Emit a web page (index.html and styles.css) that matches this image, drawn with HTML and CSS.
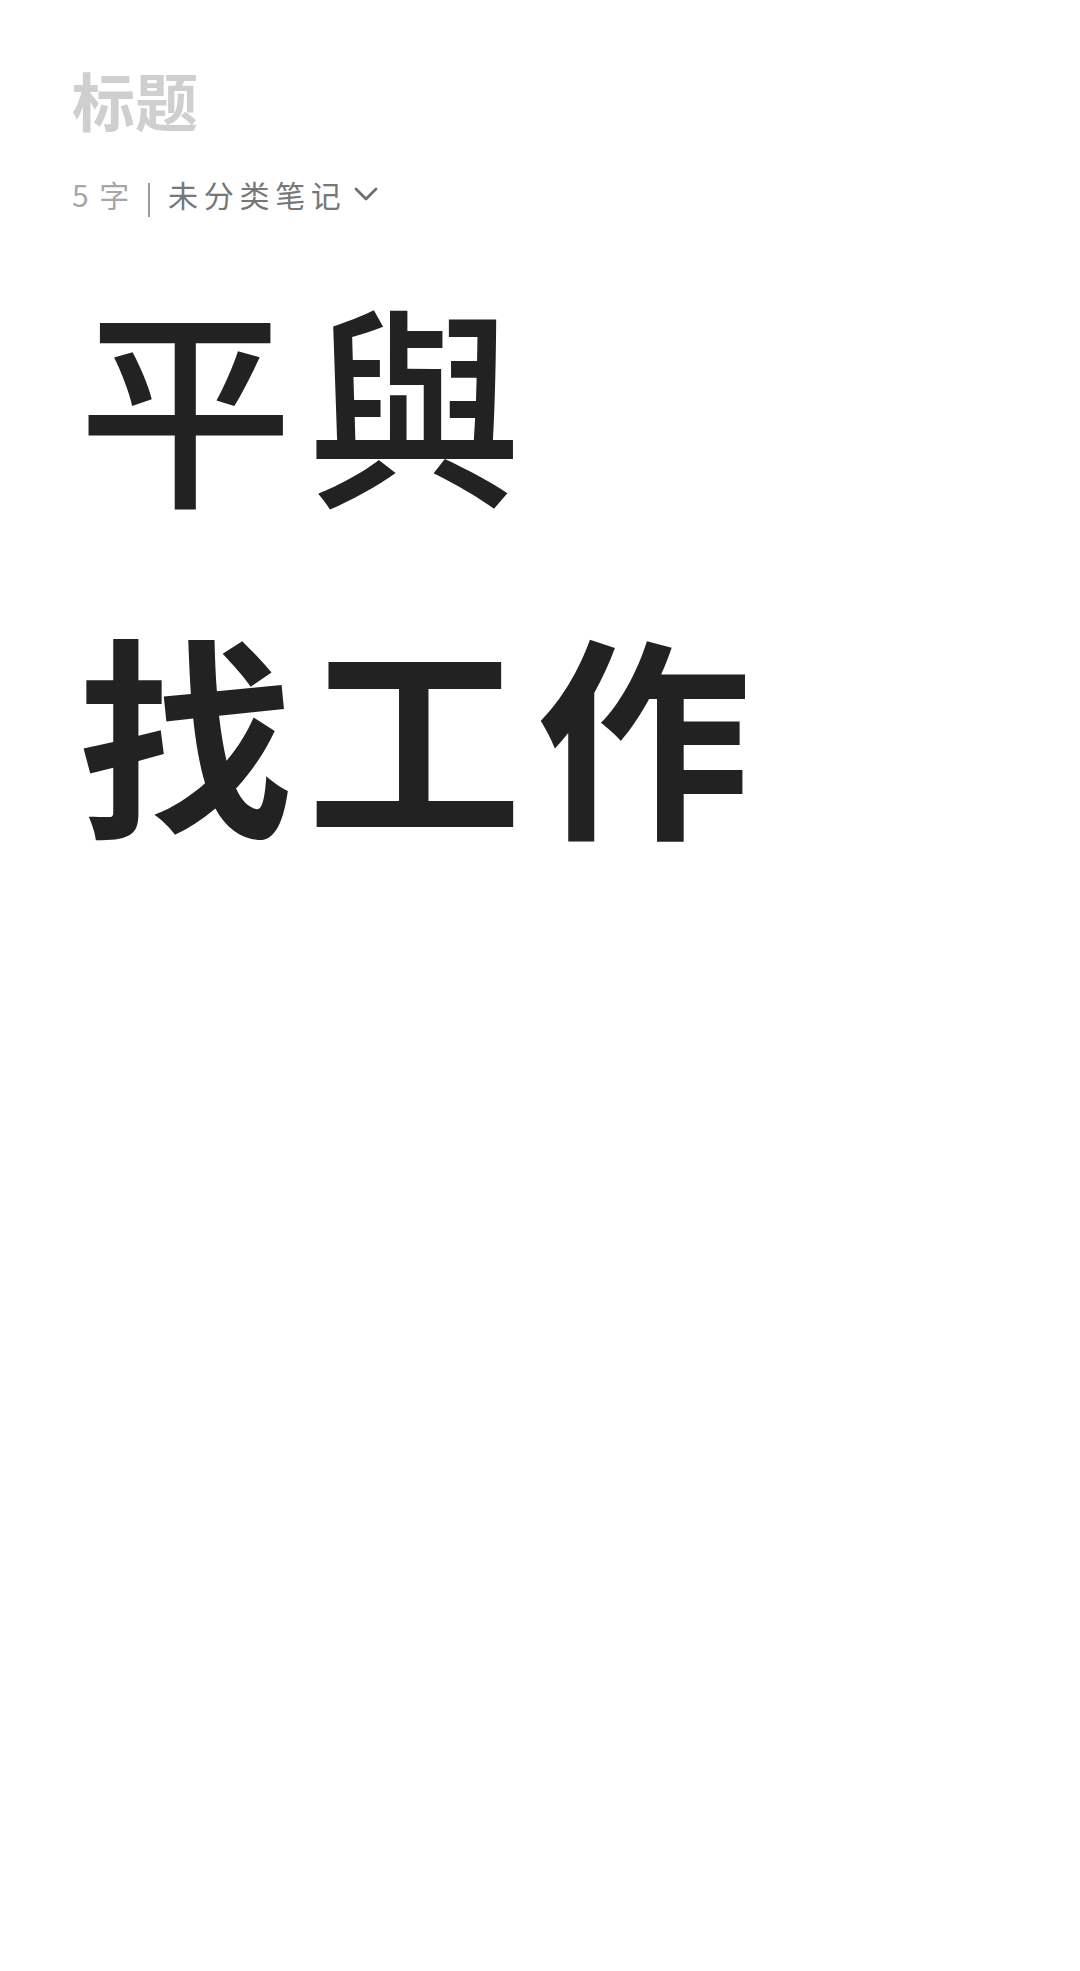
FILE: index.html
```html
<!DOCTYPE html>
<html lang="zh">
<head>
<meta charset="utf-8">
<title>笔记</title>
<link rel="stylesheet" href="styles.css">
</head>
<body>
<main class="note">
  <h1 class="title">标题</h1>
  <div class="meta">
    <span class="count"><span class="num">5</span>字</span>
    <span class="sep"></span>
    <span class="folder">未分类笔记</span>
    <svg class="chevron" viewBox="0 0 24 16" aria-hidden="true"><path d="M2 3 12 13 22 3"/></svg>
  </div>
  <div class="body">
    <p class="line line-light">平與</p>
    <p class="line line-heavy">找工作</p>
  </div>
</main>
</body>
</html>
```
FILE: styles.css
```css
html, body {
  margin: 0;
  background: #fff;
}
.note {
  min-height: 1971px;
  box-sizing: border-box;
  padding: 60px 0 0 72px;
  font-family: "Noto Sans CJK TC", "Noto Sans CJK SC", sans-serif;
  overflow: hidden;
}
.title {
  margin: 0;
  font-size: 63px;
  line-height: 78px;
  font-weight: 700;
  color: #cfcfcf;
}
.meta {
  display: flex;
  align-items: center;
  margin-top: 36px;
  height: 40px;
  font-size: 30px;
  letter-spacing: 5.7px;
  color: #777;
}
.count {
  color: #a6a6a6;
}
.num {
  margin-right: 5px;
}
.sep {
  width: 2px;
  height: 34px;
  margin: 12px 18px 0 13px;
  background: #999;
}
.chevron {
  width: 24px;
  height: 16px;
  margin-left: 7px;
  fill: none;
  stroke: #6e6e6e;
  stroke-width: 2.8;
  stroke-linecap: round;
  stroke-linejoin: round;
}
.body {
  margin-top: 18px;
  padding-left: 6px;
}
.line {
  margin: 0;
  font-size: 215px;
  line-height: 331px;
  letter-spacing: 14px;
  color: #222;
  white-space: nowrap;
}
.line-light {
  font-weight: 500;
}
.line-heavy {
  font-weight: 700;
}
```
